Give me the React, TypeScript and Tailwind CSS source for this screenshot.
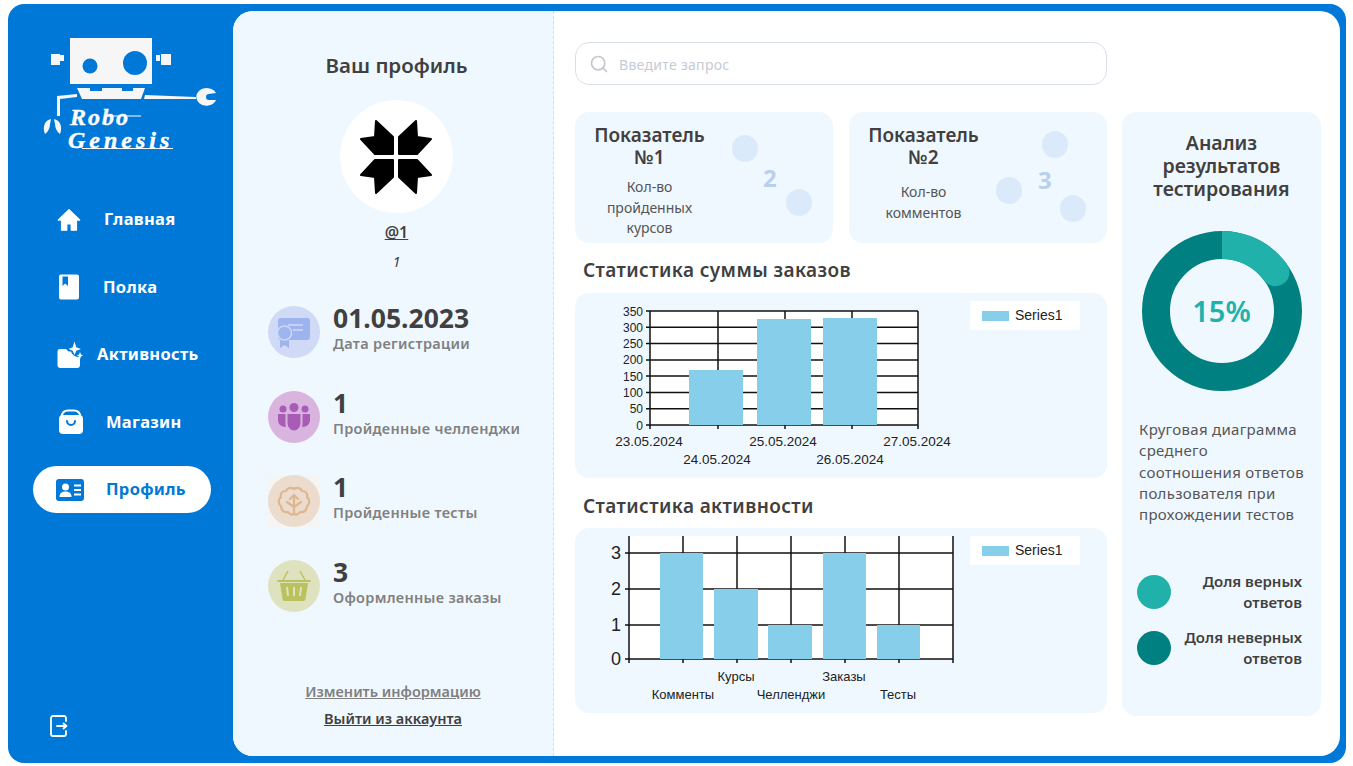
import { ReactNode } from 'react';
import { Search } from 'lucide-react';

function HomeIcon() {
  return (
    <svg width="24" height="24" viewBox="0 0 26 26" fill="#fff" stroke="#fff" strokeWidth="1.500" strokeLinejoin="round">
      <path d="M13 2 L24.500 13 H21 V24 H15.500 V17 H10.500 V24 H5 V13 H1.500 Z" />
    </svg>
  );
}

function BookIcon() {
  return (
    <svg width="22" height="26" viewBox="0 0 22 26">
      <path fill="#fff" d="M3 0.500 H19 a2 2 0 0 1 2 2 V23.500 a2 2 0 0 1 -2 2 H3 a2 2 0 0 1 -2 -2 V2.500 a2 2 0 0 1 2 -2 Z" />
      <path fill="#0078d7" d="M4.500 2.500 H10 V12 L7.250 9.500 L4.500 12 Z" />
    </svg>
  );
}

function FolderIcon() {
  return (
    <svg width="26" height="28" viewBox="0 0 26 28" fill="#fff">
      <path d="M3 8 H9 L11.500 10.500 H14 C15 14 18 16 23 16 V24 a3 3 0 0 1 -3 3 H3.500 a3 3 0 0 1 -3 -3 V10.500 a2.500 2.500 0 0 1 2.500 -2.500 Z" />
      <path d="M17.500 0.500 L19.300 6.200 L24 8 L19.300 9.800 L17.500 14 L15.700 9.800 L11.500 8 L15.700 6.200 Z" />
      <path d="M23 11 L24 13.500 L26 14.500 L24 15.500 L23 18 L22 15.500 L20 14.500 L22 13.500 Z" />
    </svg>
  );
}

function BagIcon() {
  return (
    <svg width="26" height="26" viewBox="0 0 26 26" fill="none">
      <path d="M3.500 8 C4 3.500 7 1.500 10 1.500 H16 C19 1.500 22 3.500 22.500 8" stroke="#fff" strokeWidth="2" />
      <rect x="1" y="6" width="24" height="19" rx="4" fill="#fff" />
      <path d="M9 12 a4 4 0 0 0 8 0" stroke="#0078d7" strokeWidth="2" strokeLinecap="round" />
    </svg>
  );
}

function ProfileCardIcon() {
  return (
    <svg width="28" height="22" viewBox="0 0 28 22">
      <rect width="28" height="22" rx="3" fill="#0078d7" />
      <circle cx="9.500" cy="8" r="3.500" fill="#fff" />
      <path fill="#fff" d="M3.500 18 C3.500 14 6 12.500 9.500 12.500 C13 12.500 15.500 14 15.500 18 Z" />
      <path stroke="#fff" strokeWidth="2" d="M18 6.500 H25 M18 11 H25 M18 15.500 H25" />
    </svg>
  );
}

function LogoutIcon() {
  return (
    <svg width="18" height="22" viewBox="0 0 18 22" fill="none" stroke="#fff" strokeWidth="1.800" strokeLinecap="round" strokeLinejoin="round">
      <path d="M16 6 V3 a2 2 0 0 0 -2 -2 H3 a2 2 0 0 0 -2 2 V19 a2 2 0 0 0 2 2 H14 a2 2 0 0 0 2 -2 V16" />
      <path d="M7 11 H16 M13.500 8.500 L16.500 11 L13.500 13.500" />
    </svg>
  );
}

function Logo() {
  return (
    <svg width="180" height="125" viewBox="40 30 180 125" className="ml-[32px] mt-[19px] block shrink-0">
      <g fill="#f6f6f6">
        <rect x="70" y="38" width="82" height="46" />
        <rect x="51" y="54" width="9" height="11" />
        <rect x="161" y="54" width="10" height="11" />
        <path d="M77 88 H145 L141 99 H82 Z" />
        <path d="M145 95 L196 97 V99 L144 99 Z" />
        <path d="M77 94 V97 L60 99 V116 H57 V96 Z" />
        <path d="M199 91 a10 8 0 0 1 17 2 L209 94 a3 3 0 0 0 0 6 L216 100 a10 8 0 0 1 -17 3 a8 8 0 0 1 0 -12 Z" />
        <path d="M51 119 C45 120 42 127 45 134 C48 132 50 128 50 124 Z M54 119 C60 120 63 127 60 134 C57 132 55 128 55 124 Z" />
        <rect x="60" y="55" width="4" height="6" />
        <rect x="156" y="55" width="4" height="6" />
      </g>
      <circle cx="90" cy="66" r="7.500" fill="#0078d7" />
      <circle cx="135" cy="63" r="12" fill="#0078d7" />
      <path fill="#0078d7" d="M90 88 H102 V91 H90 Z M122 88 H133 V91 H122 Z" />
      <text x="70" y="125" fill="#fff" stroke="#fff" strokeWidth="0.400" className="font-['Liberation_Serif',serif] text-[24px] font-bold italic tracking-[2px]">Robo</text>
      <path d="M108 116 H141" stroke="#fff" strokeWidth="1" />
      <text x="68" y="148" fill="#fff" stroke="#fff" strokeWidth="0.400" className="font-['Liberation_Serif',serif] text-[24px] font-bold italic tracking-[4px]">Genesis</text>
      <path d="M82 148.500 H173" stroke="#fff" strokeWidth="1" />
    </svg>
  );
}

function Avatar() {
  const piece = '-20,-36 -3,-20 -3,-3 -21,-3 -35,-18 -21,-20';
  return (
    <div className="mt-[21px] flex h-[113px] w-[113px] items-center justify-center rounded-full bg-white">
      <svg width="80" height="80" viewBox="-40 -40 80 80" fill="#000" stroke="#000" strokeWidth="2" strokeLinejoin="round">
        <polygon points={piece} />
        <polygon points={piece} transform="scale(-1 1)" />
        <polygon points={piece} transform="scale(1 -1)" />
        <polygon points={piece} transform="scale(-1 -1)" />
      </svg>
    </div>
  );
}

const navItems = [
  { label: 'Главная', icon: <HomeIcon />, className: 'pl-[22px] gap-[21px] text-white' },
  { label: 'Полка', icon: <BookIcon />, className: 'pl-[22px] gap-[20px] text-white' },
  { label: 'Активность', icon: <FolderIcon />, className: 'pl-[23px] gap-[13px] text-white' },
  { label: 'Магазин', icon: <BagIcon />, className: 'pl-[24px] gap-[21px] text-white' },
  { label: 'Профиль', icon: <ProfileCardIcon />, className: 'pl-[23px] gap-[22px] rounded-full bg-white text-[#0078d7]' },
];

function Sidebar() {
  return (
    <aside className="flex w-[225px] shrink-0 flex-col pb-[19px]">
      <Logo />
      <nav className="ml-[25px] mt-[41px] flex w-[178px] flex-col gap-[20.500px]">
        {navItems.map((item) => (
          <div key={item.label} className={`flex h-[47px] items-center text-[16.500px] font-bold tracking-[0.300px] ${item.className}`}>
            <span className="flex w-[28px] justify-center">{item.icon}</span>
            <span>{item.label}</span>
          </div>
        ))}
      </nav>
      <div className="ml-[42px] mt-auto flex">
        <LogoutIcon />
      </div>
    </aside>
  );
}

function CertificateIcon() {
  return (
    <svg width="36" height="32" viewBox="0 0 36 32">
      <rect x="2" y="2" width="32" height="22" rx="3" fill="#9db4ee" />
      <path stroke="#d0d9f5" strokeWidth="1.500" d="M12 9 H27 M17 14 H27" />
      <path fill="#9db4ee" d="M4 22 V32 L8.500 29 L13 32 V22 Z" />
      <circle cx="8.500" cy="17" r="7" fill="#9db4ee" stroke="#d0d9f5" strokeWidth="1.500" />
    </svg>
  );
}

function PeopleIcon() {
  return (
    <svg width="34" height="28" viewBox="0 0 34 28" fill="#a95cb5">
      <circle cx="6" cy="6" r="3.500" />
      <circle cx="17" cy="4.500" r="4.500" />
      <circle cx="28" cy="6" r="3.500" />
      <path d="M10.500 11 H23.500 V20 a6.500 7.500 0 0 1 -13 0 Z" />
      <path d="M1 11 H8.500 V21 C8.500 22 8.700 23 9 24 C4 24 1 21 1 17 Z" />
      <path d="M33 11 H25.500 V21 C25.500 22 25.300 23 25 24 C30 24 33 21 33 17 Z" />
    </svg>
  );
}

function BrainIcon() {
  return (
    <svg width="34" height="32" viewBox="0 0 34 30" fill="none" stroke="#deb78f" strokeWidth="2.200" strokeLinecap="round" strokeLinejoin="round">
      <path d="M17 3 C14 1 10 2 9 5 C5 5 3 8 4 11 C1 13 1 18 4 20 C4 24 7 27 11 26 C13 29 15 29 17 28 C19 29 21 29 23 26 C27 27 30 24 30 20 C33 18 33 13 30 11 C31 8 29 5 25 5 C24 2 20 1 17 3 Z" />
      <path d="M17 28 V9 M13 13 L17 9 L21 13 M17 21 L10 16 M17 21 L24 16" />
    </svg>
  );
}

function BasketIcon() {
  return (
    <svg width="34" height="32" viewBox="0 0 34 32" fill="none">
      <path d="M11 1 L6 10 M23 1 L28 10" stroke="#b9c25f" strokeWidth="1.500" />
      <path d="M0.500 11 H33.500" stroke="#b9c25f" strokeWidth="2" />
      <path fill="#b9c25f" d="M3 13 H31 L28.500 29 a2 2 0 0 1 -2 2 H7.500 a2 2 0 0 1 -2 -2 Z" />
      <path stroke="#dfe2bf" strokeWidth="2" d="M10 17 L11 26 M17 17 V26 M24 17 L23 26" />
    </svg>
  );
}

const stats: { value: string; label: string; icon: ReactNode; circle: string; square: string }[] = [
  { value: '01.05.2023', label: 'Дата регистрации', icon: <CertificateIcon />, circle: 'bg-[#d0d9f5]', square: '' },
  { value: '1', label: 'Пройденные челленджи', icon: <PeopleIcon />, circle: 'bg-[#d8b4de]', square: '' },
  { value: '1', label: 'Пройденные тесты', icon: <BrainIcon />, circle: 'bg-[#ecdccd]', square: 'bg-[#f5f5f4]' },
  { value: '3', label: 'Оформленные заказы', icon: <BasketIcon />, circle: 'bg-[#dfe2bf]', square: '' },
];

function ProfilePanel() {
  return (
    <section className="flex w-[321px] shrink-0 flex-col items-center border-r border-dashed border-[#d5dde6] bg-[#f0f8ff] pb-[28px] pt-[40px]">
      <div className="ml-[7px] flex flex-col items-center">
        <h1 className="text-[20.500px] font-semibold leading-[28px] text-[#404040]">Ваш профиль</h1>
        <Avatar />
        <div className="mt-[7px] text-[16px] font-semibold leading-[24px] text-[#404040] underline">@1</div>
        <div className="mt-[8px] text-[14px] italic leading-[20px] text-[#404040]">1</div>
      </div>
      <div className="mt-[34px] flex w-full flex-col gap-[32px] pl-[35px]">
        {stats.map((stat) => (
          <div key={stat.label} className="flex h-[52.500px] items-center gap-[13px]">
            <div className={`h-[52px] w-[52px] shrink-0 ${stat.square}`}>
              <div className={`flex h-full w-full items-center justify-center rounded-full ${stat.circle}`}>{stat.icon}</div>
            </div>
            <div className="-mt-[7px] flex flex-col">
              <span className="text-[26.500px] font-bold leading-[29px] text-[#404040]">{stat.value}</span>
              <span className="text-[14.500px] font-semibold leading-[20px] tracking-[0.300px] text-[#808080]">{stat.label}</span>
            </div>
          </div>
        ))}
      </div>
      <div className="mt-auto flex flex-col items-center gap-[7px]">
        <span className="text-[14.500px] font-semibold leading-[20px] text-[#808080] underline">Изменить информацию</span>
        <span className="text-[14.500px] font-semibold leading-[20px] text-[#404040] underline">Выйти из аккаунта</span>
      </div>
    </section>
  );
}

function MetricCard({ title, lines, value, dots, valueClass, bodyClass }: {
  title: string[];
  lines: string[];
  value: string;
  dots: string[];
  valueClass: string;
  bodyClass: string;
}) {
  return (
    <div className="relative h-[131px] w-[258px] rounded-[14px] bg-[#f0f8ff]">
      <div className="flex w-[149px] flex-col items-center pt-[12px] text-center">
        {title.map((t) => (
          <div key={t} className="text-[19px] font-semibold leading-[22px] text-[#404040]">{t}</div>
        ))}
        <div className={bodyClass}>
          {lines.map((l) => (
            <div key={l} className="text-[14px] leading-[20.500px] text-[#555555]">{l}</div>
          ))}
        </div>
      </div>
      {dots.map((d) => (
        <span key={d} className={`absolute h-[27px] w-[26px] rounded-full bg-[#dbeafb] ${d}`} />
      ))}
      <span className={`absolute text-[24px] font-bold leading-[30px] text-[#b8d0ec] ${valueClass}`}>{value}</span>
    </div>
  );
}

function Legend() {
  return (
    <g>
      <rect x="395" y="8" width="110" height="29" fill="#fff" />
      <rect x="407" y="18" width="27" height="10" fill="#87ceeb" />
      <text x="440" y="27" fontSize="14" fill="#222">Series1</text>
    </g>
  );
}

function OrdersChart() {
  const gridY = [18, 34.300, 50.600, 66.900, 83.100, 99.400, 115.700, 132];
  const labels = ['350', '300', '250', '200', '150', '100', '50', '0'];
  const ticksX = [75, 143, 210, 277, 343];
  const dates = [
    { t: '23.05.2024', x: 74, y: 153 },
    { t: '24.05.2024', x: 142, y: 171 },
    { t: '25.05.2024', x: 208, y: 153 },
    { t: '26.05.2024', x: 275, y: 171 },
    { t: '27.05.2024', x: 342, y: 153 },
  ];
  return (
    <svg width="532" height="185" className="block font-['Liberation_Sans',sans-serif]">
      <rect x="75" y="18" width="268" height="114" fill="#fff" />
      {gridY.map((y) => <line key={y} x1="71" x2="343" y1={y} y2={y} stroke="#111" strokeWidth="1.500" />)}
      {ticksX.map((x) => <line key={x} x1={x} x2={x} y1="18" y2="136" stroke="#111" strokeWidth="1.500" />)}
      <rect x="114" y="77" width="54" height="55" fill="#87ceeb" />
      <rect x="182" y="26" width="54" height="106" fill="#87ceeb" />
      <rect x="248" y="25" width="54" height="107" fill="#87ceeb" />
      {labels.map((l, i) => <text key={l} x="68" y={gridY[i] + 4.500} fontSize="12" textAnchor="end" fill="#222">{l}</text>)}
      {dates.map((d) => <text key={d.t} x={d.x} y={d.y} fontSize="13.500" textAnchor="middle" fill="#222">{d.t}</text>)}
      <Legend />
    </svg>
  );
}

function ActivityChart() {
  const gridY = [25, 61, 97, 131];
  const ticksX = [54, 108, 162, 216, 270, 324, 378];
  const bars = [
    { x: 85, w: 43, y: 25 },
    { x: 139, w: 44, y: 61 },
    { x: 193, w: 44, y: 97 },
    { x: 248, w: 43, y: 25 },
    { x: 302, w: 43, y: 97 },
  ];
  const cats = [
    { t: 'Курсы', x: 161, y: 153 },
    { t: 'Заказы', x: 269, y: 153 },
    { t: 'Комменты', x: 108, y: 171 },
    { t: 'Челленджи', x: 216, y: 171 },
    { t: 'Тесты', x: 323, y: 171 },
  ];
  return (
    <svg width="532" height="185" className="block font-['Liberation_Sans',sans-serif]">
      <rect x="54" y="8" width="324" height="123" fill="#fff" />
      {gridY.map((y) => <line key={y} x1="50" x2="378" y1={y} y2={y} stroke="#111" strokeWidth="1.500" />)}
      {ticksX.map((x) => <line key={x} x1={x} x2={x} y1="8" y2="135" stroke="#111" strokeWidth="1.500" />)}
      {bars.map((b) => <rect key={b.x} x={b.x} y={b.y} width={b.w} height={131 - b.y} fill="#87ceeb" />)}
      {['3', '2', '1', '0'].map((l, i) => <text key={l} x="46" y={gridY[i] + 6} fontSize="18" textAnchor="end" fill="#222">{l}</text>)}
      {cats.map((c) => <text key={c.t} x={c.x} y={c.y} fontSize="13" textAnchor="middle" fill="#222">{c.t}</text>)}
      <Legend />
    </svg>
  );
}

function ChartBlock({ title, cardClass, children }: { title: string; cardClass: string; children: ReactNode }) {
  return (
    <div>
      <h2 className="ml-[8px] text-[19px] font-semibold leading-[26px] tracking-[0.400px] text-[#404040]">{title}</h2>
      <div className={`overflow-hidden rounded-[14px] bg-[#f0f8ff] ${cardClass}`}>{children}</div>
    </div>
  );
}

function Donut() {
  return (
    <div className="relative mt-[31px] h-[160px] w-[160px]">
      <svg width="160" height="160" viewBox="0 0 160 160" fill="none">
        <circle cx="80" cy="80" r="66" stroke="#008080" strokeWidth="28" />
        <path d="M80 14 A66 66 0 0 1 133.400 41.200" stroke="#20b2aa" strokeWidth="28" />
        <circle cx="133.400" cy="41.200" r="14" fill="#20b2aa" />
      </svg>
      <span className="absolute inset-0 flex items-center justify-center text-[29px] font-semibold text-[#20b2aa]">15%</span>
    </div>
  );
}

function AnalysisCard() {
  return (
    <aside className="mt-[70px] flex h-[604px] w-[199px] shrink-0 flex-col items-center rounded-[14px] bg-[#f0f8ff] pt-[19px]">
      <h2 className="text-center text-[19.500px] font-semibold leading-[23px] text-[#404040]">
        Анализ
        <br />
        результатов
        <br />
        тестирования
      </h2>
      <Donut />
      <p className="mt-[28px] w-full pl-[17px] text-[15px] leading-[21.300px] tracking-[0.300px] text-[#555555]">
        Круговая диаграмма
        <br />
        среднего
        <br />
        соотношения ответов
        <br />
        пользователя при
        <br />
        прохождении тестов
      </p>
      <div className="mt-[46px] flex w-full items-center justify-between pl-[15px] pr-[19px]">
        <span className="h-[34px] w-[34px] rounded-full bg-[#20b2aa]" />
        <span className="text-right text-[15px] font-semibold leading-[20.500px] text-[#404040]">
          Доля верных
          <br />
          ответов
        </span>
      </div>
      <div className="mt-[15px] flex w-full items-center justify-between pl-[15px] pr-[19px]">
        <span className="h-[34px] w-[34px] rounded-full bg-[#008080]" />
        <span className="text-right text-[15px] font-semibold leading-[20.500px] text-[#404040]">
          Доля неверных
          <br />
          ответов
        </span>
      </div>
    </aside>
  );
}

export default function App() {
  return (
    <div className="h-[766px] w-[1353px] overflow-hidden bg-white pb-[3px] pl-[8px] pr-[7px] pt-[4px] font-['Noto_Sans',sans-serif]">
      <div className="flex h-full rounded-[16px] bg-[#0078d7] pb-[7px] pr-[6px] pt-[7px]">
        <Sidebar />
        <div className="flex flex-1 overflow-hidden rounded-[20px] bg-white">
          <ProfilePanel />
          <main className="flex flex-1 gap-[15px] pl-[21px] pt-[31px]">
            <div className="flex w-[532px] shrink-0 flex-col">
              <div className="flex h-[43px] items-center gap-[10px] rounded-[14px] border border-[#d9dfe8] bg-white pl-[13px]">
                <Search size={20} color="#c4c8cc" />
                <span className="mt-[1px] text-[14px] tracking-[0.300px] text-[#c5ccd6]">Введите запрос</span>
              </div>
              <div className="mt-[27px] flex justify-between">
                <MetricCard
                  title={['Показатель', '№1']}
                  lines={['Кол-во', 'пройденных', 'курсов']}
                  value="2"
                  valueClass="left-[188px] top-[51px]"
                  dots={['left-[157px] top-[23px]', 'left-[211px] top-[77px]']}
                  bodyClass="mt-[9px]"
                />
                <MetricCard
                  title={['Показатель', '№2']}
                  lines={['Кол-во', 'комментов']}
                  value="3"
                  valueClass="left-[189px] top-[53px]"
                  dots={['left-[193px] top-[19px]', 'left-[147px] top-[65px]', 'left-[211px] top-[83px]']}
                  bodyClass="mt-[14px]"
                />
              </div>
              <div className="mt-[14px]">
                <ChartBlock title="Статистика суммы заказов" cardClass="mt-[10px]"><OrdersChart /></ChartBlock>
              </div>
              <div className="mt-[15px]">
                <ChartBlock title="Статистика активности" cardClass="mt-[9px]"><ActivityChart /></ChartBlock>
              </div>
            </div>
            <AnalysisCard />
          </main>
        </div>
      </div>
    </div>
  );
}
